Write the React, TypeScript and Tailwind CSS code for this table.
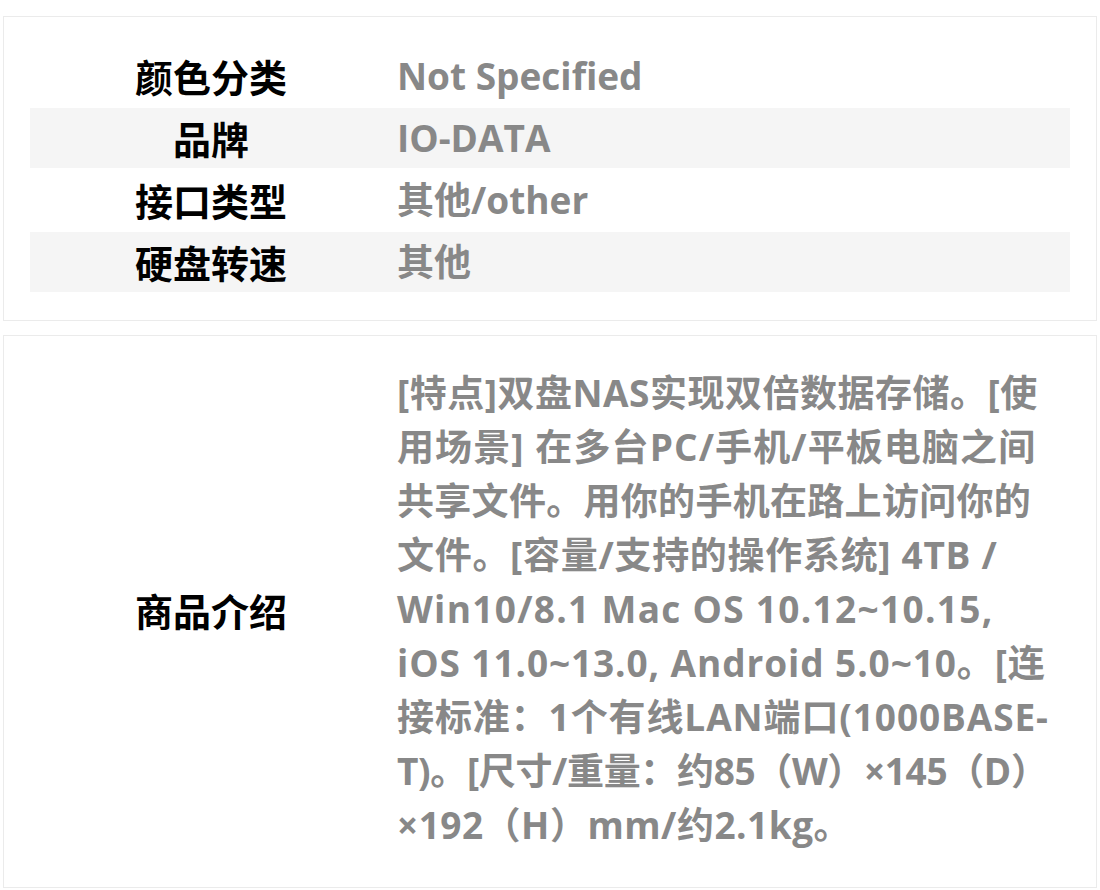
import React from "react";

const rows = [
  { k: "颜色分类", v: "Not Specified", gray: false },
  { k: "品牌", v: "IO-DATA", gray: true },
  { k: "接口类型", v: "其他/other", gray: false },
  { k: "硬盘转速", v: "其他", gray: true },
];

const lines = [
  { t: "[特点]双盘NAS实现双倍数据存储。[使", c: "tracking-[0.5px]" },
  { t: "用场景] 在多台PC/手机/平板电脑之间", c: "tracking-[1.1px]" },
  { t: "共享文件。用你的手机在路上访问你的", c: "tracking-[0.3px]" },
  { t: "文件。[容量/支持的操作系统] 4TB /", c: "tracking-[0.7px]" },
  { t: "Win10/8.1 Mac OS 10.12~10.15,", c: "tracking-[1.3px]" },
  { t: "iOS 11.0~13.0, Android 5.0~10。[连", c: "tracking-[0.9px]" },
  { t: "接标准：1个有线LAN端口(1000BASE-", c: "tracking-[0.9px]" },
  { t: "T)。[尺寸/重量：约85（W）×145（D）", c: "tracking-[-0.35px]" },
  { t: "×192（H）mm/约2.1kg。", c: "tracking-[0.5px]" },
];

export default function App() {
  return (
    <div className="bg-white w-[1100px] h-[890px] px-[3px] pt-[16px] font-['Noto_Sans_CJK_SC','Noto_Sans',sans-serif]">
      <div className="border border-[#ebebeb] px-[26px] pt-[29px] pb-[26px]">
        {rows.map((r) => (
          <div
            key={r.k}
            className={`flex items-center h-[60px] mb-[2px] ${r.gray ? "bg-[#f5f5f5]" : ""}`}
          >
            <div className="w-[362px] shrink-0 text-center text-[38px] leading-[60px] font-bold text-black">
              {r.k}
            </div>
            <div className="pl-[5px] text-[37px] leading-[60px] font-bold text-[#888888] font-['Open_Sans','Noto_Sans_CJK_SC',sans-serif]">
              {r.v}
            </div>
          </div>
        ))}
      </div>
      <div className="mt-[14px] border border-[#ebebeb] px-[26px] pt-[30px] pb-[35px]">
        <div className="flex items-center">
          <div className="w-[362px] shrink-0 text-center text-[38px] font-bold text-black">
            商品介绍
          </div>
          <div className="ml-[5px] w-[670px] text-[37px] leading-[54px] font-bold text-[#888888] font-['Open_Sans','Noto_Sans_CJK_SC',sans-serif]">
            {lines.map((l, i) => (
              <div key={i} className={`whitespace-nowrap ${l.c}`}>
                {l.t}
              </div>
            ))}
          </div>
        </div>
      </div>
    </div>
  );
}
